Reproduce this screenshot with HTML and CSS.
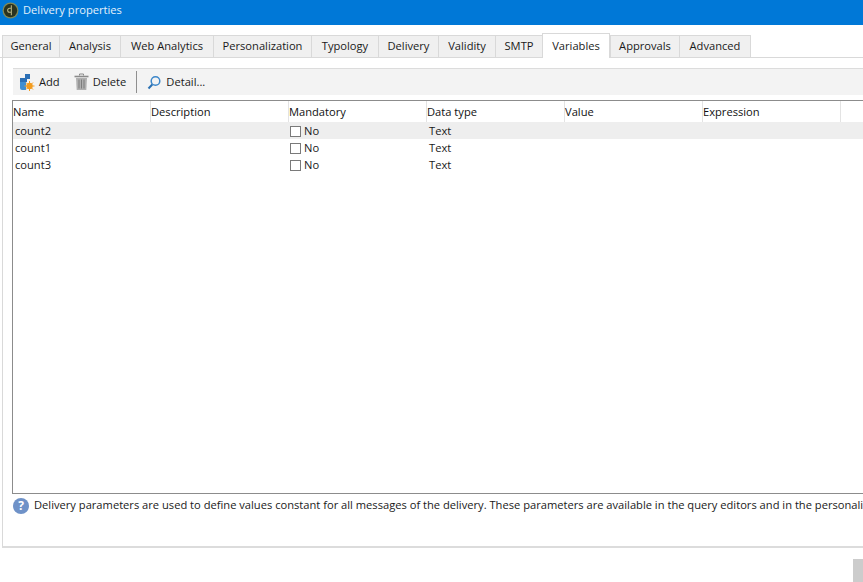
FILE: index.html
```html
<!DOCTYPE html>
<html lang="en">
<head>
<meta charset="utf-8">
<title>Delivery properties</title>
<link rel="stylesheet" href="styles.css">
</head>
<body>
<header class="titlebar">
  <svg class="app-icon" width="17" height="17" viewBox="0 0 16 16"><circle cx="8" cy="8" r="7.500" fill="#7f8a5a"/><circle cx="8" cy="8" r="6.300" fill="#2a331f"/><path d="M8.800 3v9.500M8.800 5.800H7.200a1.900 1.900 0 0 0 0 3.800h1.600" fill="none" stroke="#b5b486" stroke-width="1"/></svg>
  <span class="title">Delivery properties</span>
</header>
<nav class="tabs">
  <div class="tab">General</div>
  <div class="tab">Analysis</div>
  <div class="tab">Web Analytics</div>
  <div class="tab">Personalization</div>
  <div class="tab">Typology</div>
  <div class="tab">Delivery</div>
  <div class="tab">Validity</div>
  <div class="tab">SMTP</div>
  <div class="tab active">Variables</div>
  <div class="tab">Approvals</div>
  <div class="tab">Advanced</div>
</nav>
<main class="panel">
  <div class="toolbar">
    <button class="tool tool-add">
      <svg width="16" height="19" viewBox="0 0 16 19"><path d="M6 1h5v5H8v3H1V5h5z" fill="#2c6fb5"/><path d="M1 9h6v8H3a2 2 0 0 1-2-2z" fill="#3f8ed2"/><circle cx="10.500" cy="13" r="3.200" fill="#f39c1f"/><path d="M10.500 8v10M5.500 13h10M7 9.500l7 7M14 9.500l-7 7" stroke="#f39c1f" stroke-width="1"/></svg>
      <span>Add</span>
    </button>
    <button class="tool tool-delete">
      <svg width="15" height="18" viewBox="0 0 15 18"><path d="M5.500 2.500V1h4v1.500" fill="none" stroke="#8a8a8a"/><path d="M.5 3.500h14" stroke="#8a8a8a" stroke-width="1.600"/><path d="M2 5h11l-.7 12H2.700z" fill="#b0b0b0"/><path d="M5 6.500v9M7.500 6.500v9M10 6.500v9" stroke="#7d7d7d"/></svg>
      <span>Delete</span>
    </button>
    <div class="tool-sep"></div>
    <button class="tool tool-detail">
      <svg width="14" height="15" viewBox="0 0 14 15"><circle cx="8.500" cy="6" r="4.300" fill="none" stroke="#3b86c9" stroke-width="1.500"/><path d="M5.300 9.500L1.500 13.500" stroke="#2a70b2" stroke-width="2"/></svg>
      <span>Detail...</span>
    </button>
  </div>
  <div class="list">
    <div class="row head">
      <div class="col">Name</div>
      <div class="col">Description</div>
      <div class="col">Mandatory</div>
      <div class="col">Data type</div>
      <div class="col">Value</div>
      <div class="col">Expression</div>
    </div>
    <div class="row item selected">
      <div class="cell"><span class="cell-text">count2</span></div><div class="cell"></div>
      <div class="cell"><span class="check"></span><span class="cell-text">No</span></div>
      <div class="cell"><span class="cell-text">Text</span></div><div class="cell"></div><div class="cell"></div>
    </div>
    <div class="row item">
      <div class="cell"><span class="cell-text">count1</span></div><div class="cell"></div>
      <div class="cell"><span class="check"></span><span class="cell-text">No</span></div>
      <div class="cell"><span class="cell-text">Text</span></div><div class="cell"></div><div class="cell"></div>
    </div>
    <div class="row item">
      <div class="cell"><span class="cell-text">count3</span></div><div class="cell"></div>
      <div class="cell"><span class="check"></span><span class="cell-text">No</span></div>
      <div class="cell"><span class="cell-text">Text</span></div><div class="cell"></div><div class="cell"></div>
    </div>
  </div>
  <div class="note">
    <span class="help">?</span>
    <span class="note-text">Delivery parameters are used to define values constant for all messages of the delivery. These parameters are available in the query editors and in the personalization</span>
  </div>
</main>
<footer class="footer"><div class="corner-btn"></div></footer>
</body>
</html>
```
FILE: styles.css
```css
* { box-sizing: border-box; }
html, body { margin: 0; height: 100%; }
body {
  width: 863px;
  height: 582px;
  overflow: hidden;
  background: #fff;
  color: #1a1a1a;
  font-family: "Open Sans", "Noto Sans", sans-serif;
  font-size: 11.15px;
  display: flex;
  flex-direction: column;
}
.titlebar {
  height: 25px;
  background: #0078d7;
  display: flex;
  align-items: center;
  padding-left: 2px;
  padding-bottom: 5px;
  gap: 4px;
  flex: none;
}
.title { color: #e4f1fb; padding-bottom: 2px; }
.tabs {
  margin-top: 10px;
  height: 23px;
  flex: none;
  display: grid;
  grid-template-columns: 57px 61px 93px 98px 67px 60px 57px 47px 68px 69px 72px;
  padding-left: 2px;
  border-bottom: 1px solid #d9d9d9;
}
.tab {
  background: #f0f0f0;
  border: 1px solid #d9d9d9;
  border-right-width: 0;
  border-bottom: 0;
  display: flex;
  align-items: center;
  justify-content: center;
  height: 22px;
  padding-bottom: 3px;
}
.tab:nth-child(11) { border-right-width: 1px; }
.tab.active {
  background: #fff;
  height: 25px;
  margin-top: -2px;
  border-right-width: 1px;
  padding-bottom: 2px;
}
.panel {
  height: 490px;
  flex: none;
  margin-left: 2px;
  border-left: 1px solid #d9d9d9;
  border-bottom: 2px solid #dcdcdc;
  padding: 10px 0 0 10px;
  display: flex;
  flex-direction: column;
}
.toolbar {
  height: 27px;
  flex: none;
  background: #f3f3f3;
  border-top: 1px solid #dcdcdc;
  display: flex;
  align-items: center;
  padding-left: 6px;
}
.tool {
  background: none;
  border: 0;
  padding: 0;
  font: inherit;
  color: inherit;
  display: flex;
  align-items: center;
}
.tool span { padding-bottom: 2px; }
.tool-add { gap: 4px; }
.tool-delete { gap: 4px; margin-left: 14px; }
.tool-sep { width: 1px; height: 22px; background: #8f8f8f; margin-left: 10px; }
.tool-detail { gap: 5px; margin-left: 10px; }
.list {
  margin-top: 5px;
  height: 394px;
  flex: none;
  border: solid #8c8c8c;
  border-width: 1px 0 1px 1px;
  margin-left: -1px;
}
.row {
  display: grid;
  grid-template-columns: repeat(6, 138px) 1fr;
}
.head { height: 21px; }
.col {
  padding-top: 2px;
  border-right: 1px solid #e3e3e3;
  line-height: 18px;
  color: #111;
}
.item { height: 17px; line-height: 17px; }
.item.selected { background: #eeeeee; }
.cell { padding-left: 2px; padding-bottom: 1px; white-space: nowrap; display: flex; align-items: center; }
.cell-text { padding-bottom: 1px; }
.cell:has(.check) { padding-left: 1px; }
.check {
  width: 11px;
  height: 11px;
  border: 1px solid #7a7a7a;
  background: #fff;
  margin-right: 3px;
  flex: none;
}
.note {
  margin-top: 3px;
  display: flex;
  align-items: center;
  gap: 5px;
  white-space: nowrap;
  height: 17px;
}
.note-text { padding-bottom: 2px; }
.help {
  width: 16px;
  height: 16px;
  border-radius: 50%;
  background: #6f92c8;
  color: #fff;
  font-weight: 700;
  font-size: 12px;
  line-height: 16px;
  text-align: center;
  flex: none;
}
.footer {
  flex: 1;
  position: relative;
}
.corner-btn {
  position: absolute;
  right: 0;
  bottom: 0;
  width: 10px;
  height: 23px;
  background: #cccccc;
}
```
